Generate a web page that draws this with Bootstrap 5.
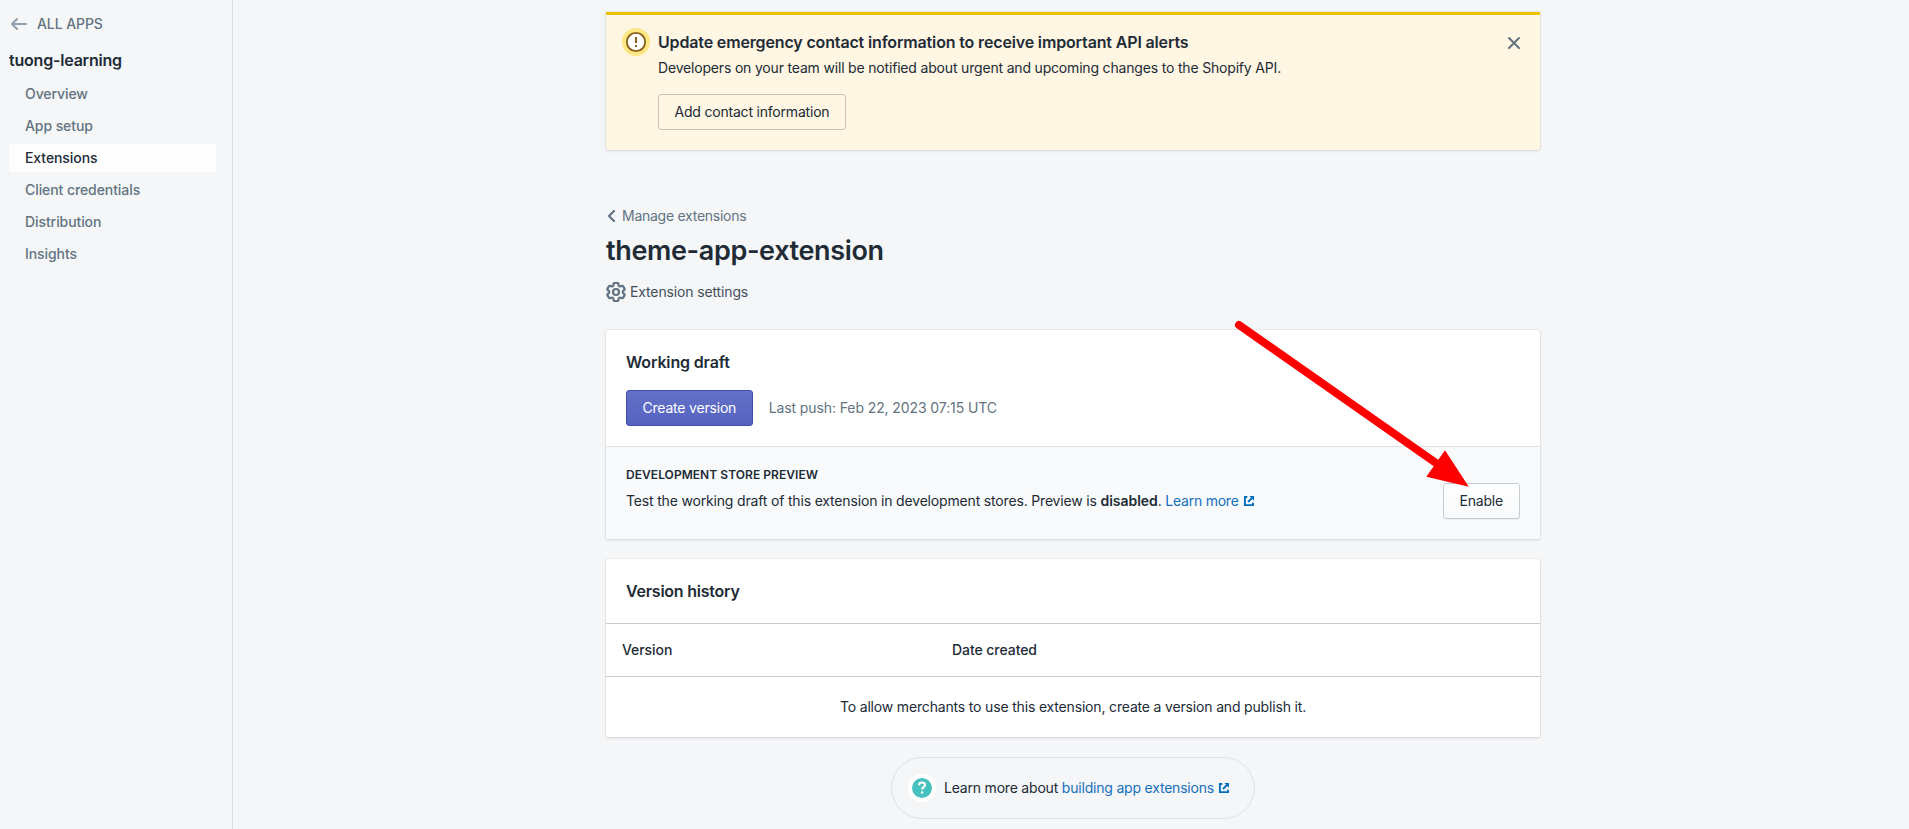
<!DOCTYPE html>
<html lang="en">
<head>
<meta charset="utf-8">
<meta name="viewport" content="width=device-width, initial-scale=1">
<title>theme-app-extension</title>
<link rel="stylesheet" href="https://cdn.jsdelivr.net/npm/bootstrap@5.3.0/dist/css/bootstrap.min.css">
<style>
:root{--ink:#212b36;--subdued:#637381;--link:#1470bd;--line:#dfe3e8;--line-strong:#c4cdd5}
body{font:400 14px/20px Inter,"Liberation Sans",sans-serif;letter-spacing:-.17px;color:var(--ink);background:#f4f6f8;height:829px;overflow:hidden}
svg{display:block;flex:none}
a{color:var(--link);text-decoration:none}
h1,h2,h3{margin:0;letter-spacing:-.15px}
h2{font-size:16px;line-height:24px;font-weight:600}
h3{font-size:12px;line-height:16px;font-weight:600;letter-spacing:.05px}
h1{font-size:27px;line-height:32px;font-weight:600;letter-spacing:-.36px}
/* sidebar */
.sidebar{width:233px;height:829px;padding:14px 16px 0 9px;border-right:1px solid #dadde2;letter-spacing:-.08px;font-weight:500}
.sidebar .nav-link{color:var(--subdued);padding:4px 16px;border-radius:3px;line-height:20px}
.sidebar .nav-link.active{background:#fdfdfd;color:var(--ink)}
.all-apps{color:var(--subdued)}
.app-name{margin:14px 0 8px;letter-spacing:-.2px}
/* main column */
.content-col{width:934px;margin-left:373px;padding-top:12px}
.panel{background:#fff;border-radius:3px;box-shadow:0 0 0 1px rgba(63,63,68,.05),0 1px 3px rgba(63,63,68,.15)}
.banner{background:#fff6e3;border-top:3px solid #eec200;border-radius:0 0 3px 3px;height:138px;padding:13px 19px 0 16px}
.banner h2{padding-top:2px}
.banner p{margin-top:4px;letter-spacing:-.18px}
.btn{--bs-btn-font-size:14px;--bs-btn-line-height:20px;--bs-btn-padding-x:15.5px;--bs-btn-padding-y:7px;--bs-btn-border-radius:3px;--bs-btn-color:var(--ink);--bs-btn-border-color:var(--line-strong);letter-spacing:-.2px;white-space:nowrap}
.btn-plain{--bs-btn-padding-x:16px;background:linear-gradient(#fff,#f9fafb);box-shadow:0 1px 0 rgba(22,29,37,.05)}
.btn-banner{--bs-btn-border-color:#c2c4b9}
.btn-create{--bs-btn-color:#fff;--bs-btn-border-color:#3f4eae;background:linear-gradient(#6371c7,#5563c1)}
.page-head{margin-top:56px}
.page-head h1{margin-top:9px}
.crumb{color:var(--subdued);letter-spacing:-.26px}
.settings{color:#454f5b;margin-top:15px;letter-spacing:-.14px}
.draft{margin-top:28px}
.draft-top{padding:20px;height:116px}
.draft-row{margin-top:16px}
.last-push{color:var(--subdued);letter-spacing:-.1px}
.preview-section{background:#f9fafb;border-top:1px solid var(--line);padding:20px;height:93px;border-radius:0 0 3px 3px}
.preview-copy{margin-top:8px}
.preview-copy b{font-weight:600;letter-spacing:-.05px}
.preview-copy a{letter-spacing:-.24px}
.history-panel{margin-top:20px;overflow:hidden}
.history-title{padding:20px;letter-spacing:-.23px}
.history{--bs-table-bg:#fff;--bs-table-color:var(--ink);margin:0;border-collapse:separate;border-spacing:0}
.history tr>*{border-top:1px solid var(--line-strong);border-bottom:0}
.history th{font-weight:500;letter-spacing:-.06px;padding:16px}
.history .empty-row{padding:20px}
.col-version{width:330px}
.footer-help{margin-top:20px;border:1px solid #dfe1e6;border-radius:31px;width:364px;height:62px;padding-left:16px;letter-spacing:-.2px}
/* arrow drawn over the card */
.pointer{left:1230px;top:315px}
</style>
</head>
<body class="position-relative">
<div class="d-flex">
  <aside class="sidebar flex-shrink-0">
    <a href="#" class="all-apps d-flex align-items-center">
      <svg class="me-2" width="20" height="20" viewBox="0 0 20 20" fill="none" stroke="#919eab" stroke-width="2" stroke-linecap="round" stroke-linejoin="round"><path d="M17 10H3M8 5l-5 5 5 5"/></svg>ALL APPS</a>
    <h2 class="app-name">tuong-learning</h2>
    <nav class="nav flex-column gap-1">
      <a class="nav-link" href="#">Overview</a>
      <a class="nav-link" href="#">App setup</a>
      <a class="nav-link active" href="#">Extensions</a>
      <a class="nav-link" href="#">Client credentials</a>
      <a class="nav-link" href="#">Distribution</a>
      <a class="nav-link" href="#">Insights</a>
    </nav>
  </aside>
  <main class="content-col">
    <section class="panel banner d-flex align-items-start">
      <svg width="28" height="28" viewBox="0 0 28 28"><circle cx="14" cy="14" r="14" fill="#ffe785"/><circle cx="14" cy="14" r="9.2" fill="#fff" stroke="#8a6116" stroke-width="1.8"/><path d="M13 9h2v6h-2zM13 17h2v2h-2z" fill="#8a6116"/></svg>
      <div class="flex-grow-1 ms-2">
        <h2>Update emergency contact information to receive important API alerts</h2>
        <p class="mb-3">Developers on your team will be notified about urgent and upcoming changes to the Shopify API.</p>
        <button class="btn btn-banner" type="button">Add contact information</button>
      </div>
      <svg class="mt-2" width="14" height="14" viewBox="0 0 14 14" fill="none" stroke="#637381" stroke-width="2" stroke-linecap="round"><path d="M2 2l10 10M12 2L2 12"/></svg>
    </section>

    <header class="page-head">
      <a href="#" class="d-flex align-items-center crumb"><svg width="16" height="20" viewBox="0 0 16 20" fill="none" stroke="#637381" stroke-width="2.2" stroke-linecap="round" stroke-linejoin="round"><path d="M8 5l-5 5 5 5"/></svg>Manage extensions</a>
      <h1>theme-app-extension</h1>
      <a href="#" class="d-flex align-items-center settings"><svg class="me-1" width="20" height="20" viewBox="2 2 20 20" fill="none" stroke="#637381" stroke-width="2.2" stroke-linejoin="round"><path d="M9.594 3.94c.09-.542.56-.94 1.11-.94h2.593c.55 0 1.02.398 1.11.94l.213 1.281c.063.374.313.686.645.87.074.04.147.083.22.127.325.196.72.257 1.075.124l1.217-.456a1.125 1.125 0 0 1 1.37.49l1.296 2.247a1.125 1.125 0 0 1-.26 1.431l-1.003.827c-.293.241-.438.613-.43.992a7.723 7.723 0 0 1 0 .255c-.008.378.137.75.43.991l1.004.827c.424.35.534.955.26 1.43l-1.298 2.247a1.125 1.125 0 0 1-1.369.491l-1.217-.456c-.355-.133-.75-.072-1.076.124a6.47 6.47 0 0 1-.22.128c-.331.183-.581.495-.644.869l-.213 1.281c-.09.543-.56.94-1.11.94h-2.594c-.55 0-1.019-.398-1.11-.94l-.213-1.281c-.062-.374-.312-.686-.644-.87a6.52 6.52 0 0 1-.22-.127c-.325-.196-.72-.257-1.076-.124l-1.217.456a1.125 1.125 0 0 1-1.369-.49l-1.297-2.247a1.125 1.125 0 0 1 .26-1.431l1.004-.827c.292-.24.437-.613.43-.991a6.932 6.932 0 0 1 0-.255c.007-.38-.138-.751-.43-.992l-1.004-.827a1.125 1.125 0 0 1-.26-1.43l1.297-2.247a1.125 1.125 0 0 1 1.37-.491l1.216.456c.356.133.751.072 1.076-.124.072-.044.146-.086.22-.128.332-.183.582-.495.644-.869l.214-1.28Z"/><circle cx="12" cy="12" r="3"/></svg>Extension settings</a>
    </header>

    <section class="panel draft">
      <div class="draft-top">
        <h2>Working draft</h2>
        <div class="d-flex align-items-center gap-3 draft-row">
          <button class="btn btn-create" type="button">Create version</button>
          <span class="last-push">Last push: Feb 22, 2023 07:15 UTC</span>
        </div>
      </div>
      <div class="preview-section d-flex justify-content-between">
        <div>
          <h3>DEVELOPMENT STORE PREVIEW</h3>
          <p class="mb-0 preview-copy">Test the working draft of this extension in development stores. Preview is <b>disabled</b>. <a href="#" class="d-inline-flex align-items-center">Learn more<svg class="ms-1" width="12" height="12" viewBox="0 0 12 12" fill="none" stroke="#006fbb" stroke-width="1.9"><path d="M4.3 2H1.9v8.1H10V7.7"/><path d="M5 7l4.6-4.6"/><path d="M6.3 1H11v4.7z" fill="#006fbb" stroke="none"/></svg></a></p>
        </div>
        <button class="btn btn-plain align-self-end" type="button">Enable</button>
      </div>
    </section>

    <section class="panel history-panel">
      <h2 class="history-title">Version history</h2>
      <table class="table history">
        <thead><tr><th class="col-version">Version</th><th>Date created</th></tr></thead>
        <tbody><tr><td colspan="2" class="text-center empty-row">To allow merchants to use this extension, create a version and publish it.</td></tr></tbody>
      </table>
    </section>

    <div class="footer-help d-flex align-items-center mx-auto">
      <svg width="28" height="28" viewBox="0 0 28 28"><circle cx="14" cy="14" r="14" fill="#fff"/><circle cx="14" cy="14" r="10" fill="#47c1bf"/><path d="M11 11.3c0-1.7 1.3-2.8 3-2.8s3 1.1 3 2.6c0 2-2.9 2.1-2.9 4.4" fill="none" stroke="#fff" stroke-width="2.2"/><circle cx="14.1" cy="18.5" r="1.3" fill="#fff"/></svg>
      <span class="ms-2">Learn more about <a href="#" class="d-inline-flex align-items-center">building app extensions<svg class="ms-1" width="12" height="12" viewBox="0 0 12 12" fill="none" stroke="#006fbb" stroke-width="1.9"><path d="M4.3 2H1.9v8.1H10V7.7"/><path d="M5 7l4.6-4.6"/><path d="M6.3 1H11v4.7z" fill="#006fbb" stroke="none"/></svg></a></span>
    </div>
  </main>
</div>
<svg class="pointer position-absolute" width="250" height="180" viewBox="1230 315 250 180" fill="red"><path d="M1239 325L1436 463" stroke="red" stroke-width="8" stroke-linecap="round"/><path d="M1445 450.2L1426.3 476.8L1468.8 486.8z"/></svg>
<script src="https://cdn.jsdelivr.net/npm/bootstrap@5.3.0/dist/js/bootstrap.bundle.min.js"></script>
</body>
</html>
